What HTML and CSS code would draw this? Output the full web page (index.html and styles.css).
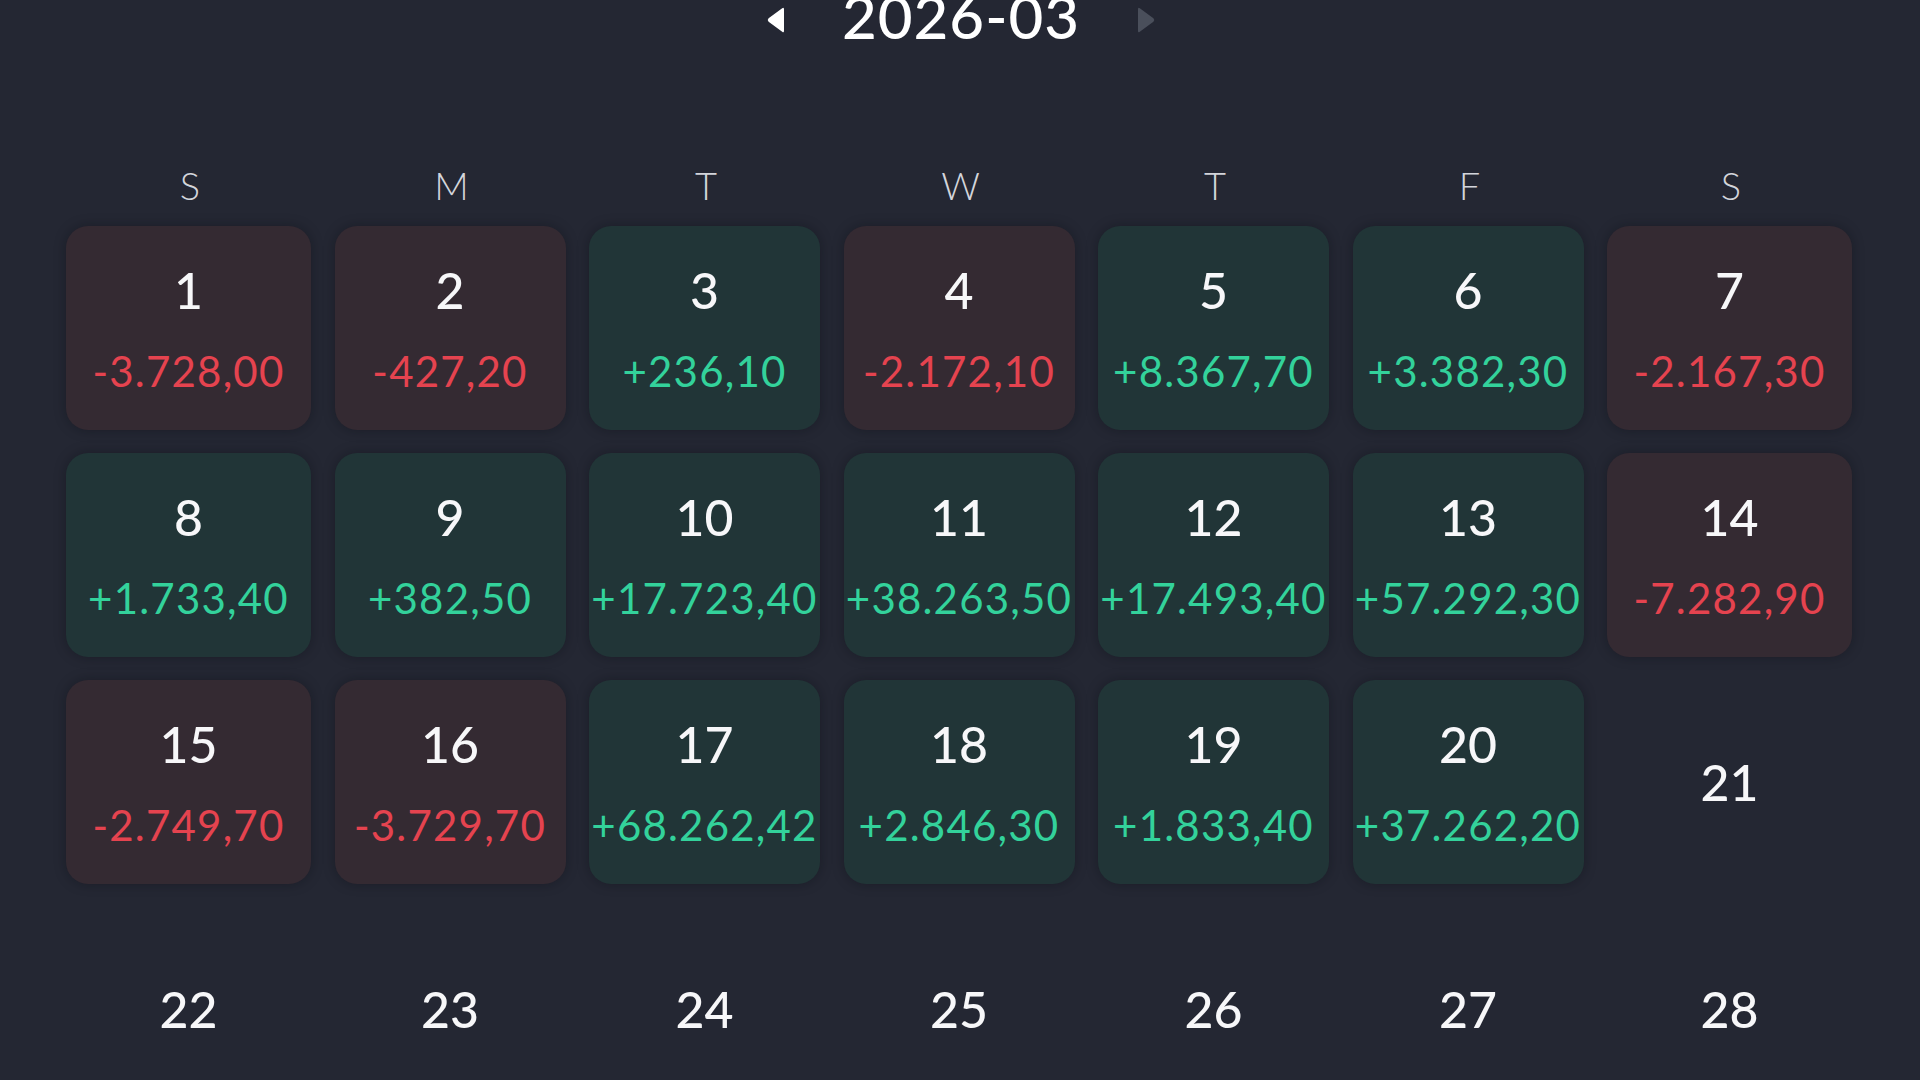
FILE: index.html
```html
<!DOCTYPE html>
<html lang="en">
<head>
<meta charset="utf-8">
<title>2026-03</title>
<link rel="stylesheet" href="styles.css">
</head>
<body>
<main class="calendar">
  <header class="month-nav">
    <button class="nav-btn nav-prev" aria-label="Previous month">
      <svg viewBox="0 0 20 28" width="20" height="28"><path d="M18 3.2 Q18 0.8 16.2 2.2 L2.6 12.3 Q0.8 14 2.6 15.7 L16.2 25.8 Q18 27.2 18 24.8 Z" fill="#ffffff"/></svg>
    </button>
    <h1 class="month-title">2026-03</h1>
    <button class="nav-btn nav-next" aria-label="Next month">
      <svg viewBox="0 0 20 28" width="20" height="28"><path d="M2 3.2 Q2 0.8 3.8 2.2 L17.4 12.3 Q19.2 14 17.4 15.7 L3.8 25.8 Q2 27.2 2 24.8 Z" fill="#4a4f5b"/></svg>
    </button>
  </header>

  <div class="grid weekdays">
    <div class="wd">S</div><div class="wd">M</div><div class="wd">T</div><div class="wd">W</div><div class="wd">T</div><div class="wd">F</div><div class="wd">S</div>
  </div>

  <div class="grid days">
    <div class="day loss"><span class="num">1</span><span class="amt">-3.728,00</span></div>
    <div class="day loss"><span class="num">2</span><span class="amt">-427,20</span></div>
    <div class="day gain"><span class="num">3</span><span class="amt">+236,10</span></div>
    <div class="day loss"><span class="num">4</span><span class="amt">-2.172,10</span></div>
    <div class="day gain"><span class="num">5</span><span class="amt">+8.367,70</span></div>
    <div class="day gain"><span class="num">6</span><span class="amt">+3.382,30</span></div>
    <div class="day loss"><span class="num">7</span><span class="amt">-2.167,30</span></div>

    <div class="day gain"><span class="num">8</span><span class="amt">+1.733,40</span></div>
    <div class="day gain"><span class="num">9</span><span class="amt">+382,50</span></div>
    <div class="day gain"><span class="num">10</span><span class="amt">+17.723,40</span></div>
    <div class="day gain"><span class="num">11</span><span class="amt">+38.263,50</span></div>
    <div class="day gain"><span class="num">12</span><span class="amt">+17.493,40</span></div>
    <div class="day gain"><span class="num">13</span><span class="amt">+57.292,30</span></div>
    <div class="day loss"><span class="num">14</span><span class="amt">-7.282,90</span></div>

    <div class="day loss"><span class="num">15</span><span class="amt">-2.749,70</span></div>
    <div class="day loss"><span class="num">16</span><span class="amt">-3.729,70</span></div>
    <div class="day gain"><span class="num">17</span><span class="amt">+68.262,42</span></div>
    <div class="day gain"><span class="num">18</span><span class="amt">+2.846,30</span></div>
    <div class="day gain"><span class="num">19</span><span class="amt">+1.833,40</span></div>
    <div class="day gain"><span class="num">20</span><span class="amt">+37.262,20</span></div>
    <div class="day"><span class="num">21</span></div>

    <div class="day"><span class="num">22</span></div>
    <div class="day"><span class="num">23</span></div>
    <div class="day"><span class="num">24</span></div>
    <div class="day"><span class="num">25</span></div>
    <div class="day"><span class="num">26</span></div>
    <div class="day"><span class="num">27</span></div>
    <div class="day"><span class="num">28</span></div>
  </div>
</main>
</body>
</html>
```

FILE: styles.css
```css
* { box-sizing: border-box; }

html, body {
  margin: 0;
  padding: 0;
  height: 100%;
}

body {
  background: #242733;
  color: #ffffff;
  font-family: Lato, "Noto Sans", "Liberation Sans", sans-serif;
  overflow: hidden;
}

.calendar {
  display: flex;
  flex-direction: column;
}

.month-nav {
  display: flex;
  justify-content: center;
  align-items: center;
  gap: 56px;
  height: 72px;
  margin-top: -20px;
  padding-left: 2px;
}

.nav-btn {
  background: none;
  border: 0;
  padding: 0;
  width: 20px;
  height: 28px;
  display: flex;
  margin-top: 8px;
}

.month-title {
  margin: 0;
  font-size: 60px;
  line-height: 72px;
  font-weight: 500;
  letter-spacing: 1px;
  color: #ffffff;
}

.grid {
  display: grid;
  grid-template-columns: 245px repeat(5, 231px) 245px;
  column-gap: 23.5px;
  margin-left: 66px;
}

.weekdays {
  margin-top: 111px;
}

.wd {
  text-align: center;
  font-size: 38px;
  line-height: 44px;
  font-weight: 300;
  color: #d3d5db;
  padding-left: 3px;
}

.days {
  margin-top: 19px;
  grid-auto-rows: 204px;
  row-gap: 23px;
}

.day {
  display: flex;
  flex-direction: column;
  align-items: center;
  justify-content: center;
  border-radius: 22px;
}

.day.loss {
  background: #342a32;
  box-shadow: 0 0 12px rgba(10, 12, 18, 0.35);
}

.day.gain {
  background: #213537;
  box-shadow: 0 0 12px rgba(10, 12, 18, 0.35);
}

.num {
  font-size: 50px;
  line-height: 60px;
  font-weight: 500;
  color: #f7f7f9;
}

.amt {
  margin-top: 27px;
  font-size: 42px;
  line-height: 49px;
  font-weight: 400;
  letter-spacing: 1.2px;
}

.loss .amt { color: #e5434f; }
.gain .amt { color: #33d29b; }
```
